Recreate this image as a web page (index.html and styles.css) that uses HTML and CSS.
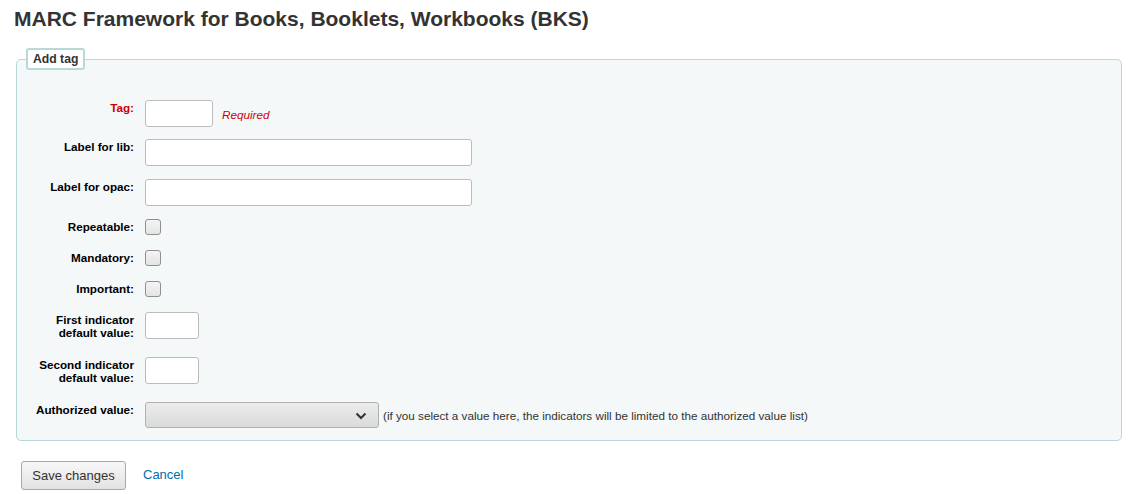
FILE: index.html
```html
<!DOCTYPE html>
<html lang="en">
<head>
<meta charset="utf-8">
<title>MARC Framework for Books, Booklets, Workbooks (BKS)</title>
<link rel="stylesheet" href="styles.css">
</head>
<body>
<main class="page">
  <h1 class="title">MARC Framework for Books, Booklets, Workbooks (BKS)</h1>
  <form class="form">
    <fieldset class="rows">
      <legend class="legend">Add tag</legend>
      <div class="row row-input row-first">
        <label class="label required-label" for="tag">Tag:</label>
        <input class="text tag-input" id="tag" type="text">
        <span class="required">Required</span>
      </div>
      <div class="row row-input">
        <label class="label" for="lib">Label for lib:</label>
        <input class="text wide-input" id="lib" type="text">
      </div>
      <div class="row row-input">
        <label class="label" for="opac">Label for opac:</label>
        <input class="text wide-input" id="opac" type="text">
      </div>
      <div class="row row-check">
        <label class="label" for="rep">Repeatable:</label>
        <input class="check" id="rep" type="checkbox">
      </div>
      <div class="row row-check">
        <label class="label" for="man">Mandatory:</label>
        <input class="check" id="man" type="checkbox">
      </div>
      <div class="row row-check">
        <label class="label" for="imp">Important:</label>
        <input class="check" id="imp" type="checkbox">
      </div>
      <div class="row row-two">
        <label class="label" for="ind1">First indicator default value:</label>
        <input class="text ind-input" id="ind1" type="text">
      </div>
      <div class="row row-two">
        <label class="label" for="ind2">Second indicator default value:</label>
        <input class="text ind-input" id="ind2" type="text">
      </div>
      <div class="row row-select">
        <label class="label" for="auth">Authorized value:</label>
        <div class="select">
          <svg class="chevron" width="12" height="8" viewBox="0 0 12 8" aria-hidden="true"><path d="M1.5 1.5 L6 6 L10.5 1.5" fill="none" stroke="#333" stroke-width="2"/></svg>
        </div>
        <span class="hint">(if you select a value here, the indicators will be limited to the authorized value list)</span>
      </div>
    </fieldset>
    <div class="actions">
      <button class="btn" type="button">Save changes</button>
      <a class="cancel" href="#">Cancel</a>
    </div>
  </form>
</main>
</body>
</html>
```
FILE: styles.css
```css
html, body {
  margin: 0;
  padding: 0;
  background: #ffffff;
}
body {
  font-family: "Liberation Sans", Arial, sans-serif;
  color: #000;
}
.page {
  padding: 7px 15px 0 16px;
}
.title {
  margin: 0 0 0 -2px;
  font-size: 21px;
  line-height: 24px;
  font-weight: bold;
  color: #333333;
}
.form {
  margin: 0;
}
.rows {
  margin: 17px 0 0 0;
  padding: 30px 10px 12px 11px;
  border: 1px solid #b9d8d9;
  border-radius: 5px;
  background: #f4f8f9;
  min-width: 0;
}
.legend {
  margin-left: -2px;
  padding: 3px 5px 2px 5px;
  border: 2px solid #b9d8d9;
  border-radius: 3px;
  background: #ffffff;
  font-size: 12.2px;
  line-height: 13px;
  font-weight: bold;
  color: #333;
}
.row {
  display: flex;
  align-items: flex-start;
  margin-bottom: 13px;
}
.row-first {
  margin-bottom: 12px;
}
.row:last-child {
  margin-bottom: 0;
}
.label {
  flex: 0 0 106px;
  width: 106px;
  margin-right: 11px;
  padding-top: 1px;
  text-align: right;
  font-size: 11.7px;
  line-height: 13px;
  font-weight: bold;
  color: #000;
}
.required-label {
  color: #cc0000;
}
.row-two {
  min-height: 32px;
}
.row-check {
  height: 18px;
}
.text {
  box-sizing: border-box;
  height: 27px;
  margin: 0;
  padding: 2px 4px;
  border: 1px solid #bcbcbc;
  border-radius: 3px;
  background: #ffffff;
  font-family: inherit;
  font-size: 13px;
}
.tag-input {
  width: 68px;
}
.wide-input {
  width: 327px;
}
.ind-input {
  width: 54px;
}
.required {
  align-self: center;
  margin-left: 9px;
  font-size: 11.7px;
  font-style: italic;
  color: #cc0000;
  padding-top: 1px;
}
.check {
  appearance: none;
  -webkit-appearance: none;
  box-sizing: border-box;
  width: 16px;
  height: 16px;
  margin: 0;
  border: 1px solid #8f8f8f;
  border-radius: 3px;
  background: linear-gradient(#f4f4f4, #e4e4e4);
}
.select {
  box-sizing: border-box;
  position: relative;
  width: 234px;
  height: 26px;
  border: 1px solid #b0b0b0;
  border-radius: 3px;
  background: linear-gradient(#ececec, #dadada);
}
.chevron {
  position: absolute;
  right: 11px;
  top: 9px;
}
.hint {
  align-self: center;
  margin-left: 4px;
  font-size: 11.7px;
  color: #333;
}
.actions {
  display: flex;
  align-items: center;
  padding: 20px 0 0 5px;
}
.btn {
  box-sizing: border-box;
  width: 105px;
  height: 29px;
  margin: 0;
  padding: 0;
  border: 1px solid #a8a8a8;
  border-radius: 3px;
  background: linear-gradient(#f7f7f7, #e2e2e2);
  font-family: inherit;
  font-size: 13px;
  color: #333;
}
.cancel {
  margin-left: 17px;
  margin-top: -2px;
  font-size: 13px;
  color: #006caa;
  text-decoration: none;
}
```
